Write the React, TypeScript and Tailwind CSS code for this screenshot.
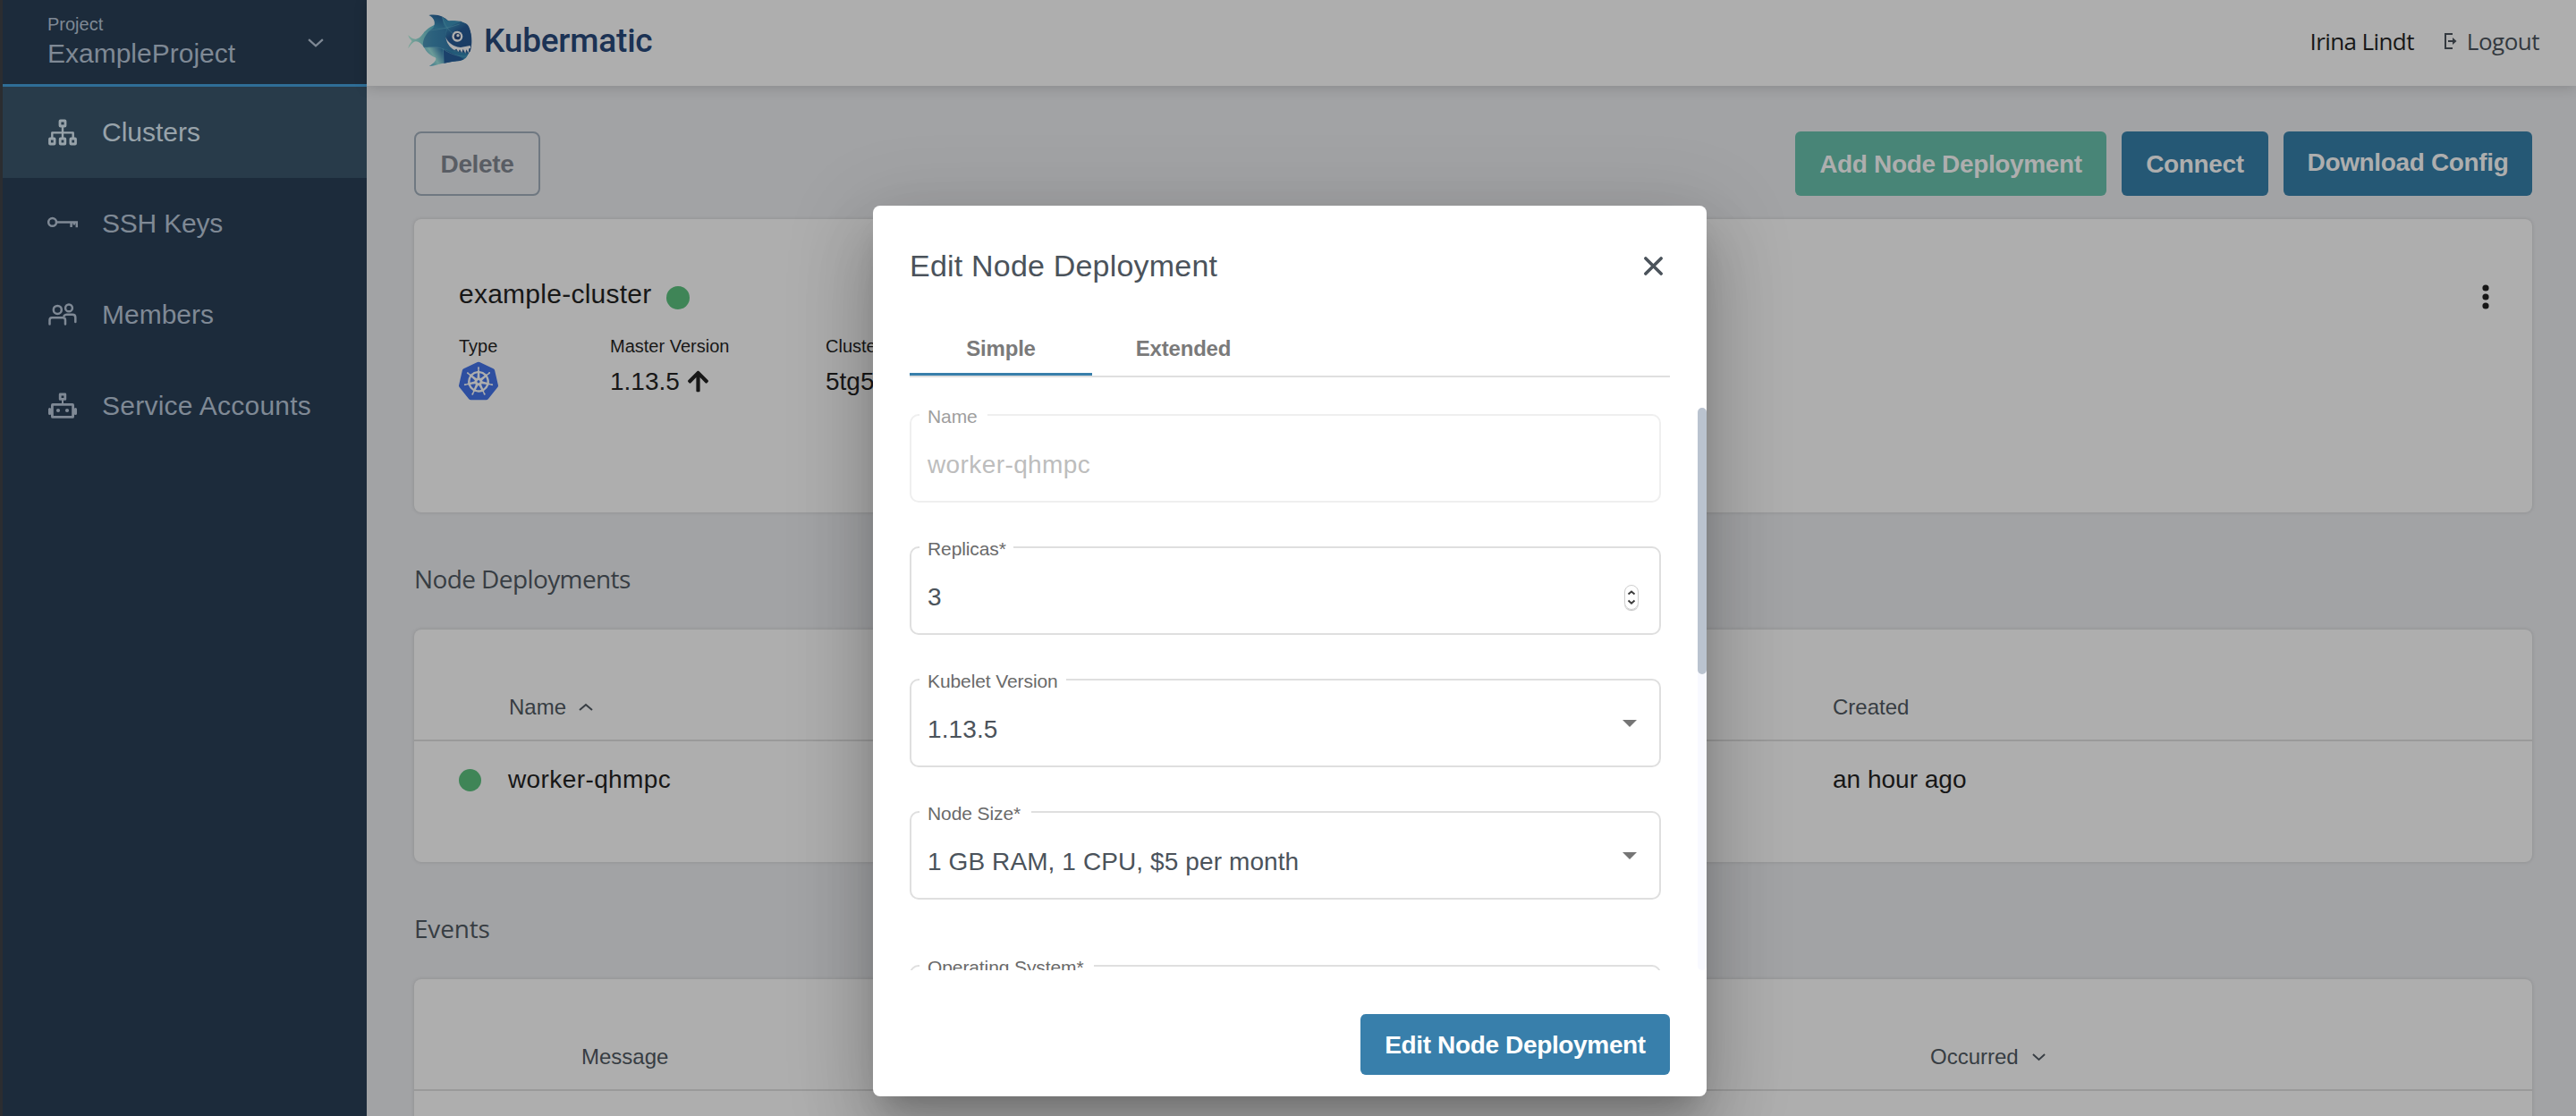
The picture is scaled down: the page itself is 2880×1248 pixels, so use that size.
import type { ReactNode } from "react";
import { FaArrowUp } from "react-icons/fa";
import { SiKubernetes } from "react-icons/si";

function FishLogo() {
  return (
    <svg width="72" height="58" viewBox="47 47 216 174" className="shrink-0">
      <defs>
        <linearGradient id="tail" x1="0" x2="1">
          <stop offset="0" stopColor="#7fa79a" />
          <stop offset="0.4" stopColor="#3f7f8c" />
          <stop offset="1" stopColor="#1c426b" />
        </linearGradient>
        <linearGradient id="fin" x1="0.7" y1="0" x2="0.1" y2="1">
          <stop offset="0" stopColor="#1b4068" />
          <stop offset="1" stopColor="#2f7187" />
        </linearGradient>
        <linearGradient id="low" x1="1" y1="0.2" x2="0" y2="0.8">
          <stop offset="0" stopColor="#1f5075" />
          <stop offset="0.5" stopColor="#6c9c99" />
          <stop offset="1" stopColor="#2a6a85" />
        </linearGradient>
        <linearGradient id="head" x1="0" y1="0" x2="0.6" y2="1">
          <stop offset="0" stopColor="#2f6e86" />
          <stop offset="0.45" stopColor="#1a3f68" />
          <stop offset="1" stopColor="#1c3d64" />
        </linearGradient>
      </defs>
      <path d="M48 117C56 124 62 131 74 130C85 129 92 120 101 108C118 90 138 78 180 69L225 70C250 80 262 105 261 140C260 175 245 203 190 206C160 206 120 185 101 158C92 145 84 138 74 138C62 139 55 153 48 162C50 147 60 140 60 137C58 131 50 128 48 117Z" fill="url(#tail)" />
      <path d="M117 50C150 45 168 56 184 70L176 100L131 94C141 78 138 60 117 50Z" fill="url(#fin)" />
      <path d="M184 70C200 67 212 70 224 72C206 78 190 90 178 99C160 80 168 72 162 56C170 60 178 68 184 70Z" fill="#2a6580" />
      <path d="M178 98C195 80 225 68 244 79C262 92 263 150 256 172C225 182 180 160 173 124Z" fill="url(#head)" />
      <path d="M131 94L176 98L173 124C178 142 190 155 206 164L200 172L165 162L101 158C90 140 110 105 131 94Z" fill="#1e4c73" opacity="0.6" />
      <path d="M102 158C130 158 150 155 165 163L168 211C150 213 140 220 118 221C138 210 146 196 138 191C120 185 108 172 102 158Z" fill="url(#low)" />
      <path d="M166 164C190 170 225 178 250 178C244 196 230 204 206 204L168 211Z" fill="#235b79" />
      <path d="M166 164C190 174 215 186 235 198C220 206 200 204 206 204L168 211Z" fill="#1b416b" />
      <path d="M101 108C120 96 160 102 220 80M162 56C168 80 184 104 205 116M102 158C135 158 150 155 165 164L168 211M166 164C185 178 215 190 245 188" fill="none" stroke="#4d8190" strokeWidth="1.5" />
      <path d="M174 122C180 142 200 156 224 158L256 152L258 160L252 162L250 177L243 165L240 178L232 163L228 176L221 165L216 173L210 163L203 167C187 158 176 142 174 122Z" fill="#aeaeae" />
      <circle cx="213" cy="121" r="18" fill="#aeaeae" />
      <circle cx="213" cy="121" r="11" fill="#1a3258" />
      <circle cx="215" cy="118" r="5" fill="#aeaeae" />
    </svg>
  );
}

const strokeProps = { fill: "none", stroke: "currentColor", strokeWidth: 2.8, strokeLinejoin: "round" as const, strokeLinecap: "round" as const };

function SitemapIcon() {
  return (
    <svg width="34" height="30" viewBox="0 0 34 30" {...strokeProps}>
      <rect x="14" y="2" width="6" height="6" rx="0.6" />
      <rect x="2.5" y="22" width="5.6" height="6" rx="0.6" />
      <rect x="14.2" y="22" width="5.6" height="6" rx="0.6" />
      <rect x="25.9" y="22" width="5.6" height="6" rx="0.6" />
      <path d="M17 8V22M5.3 22V15.4H28.7V22" strokeWidth="2.4" />
    </svg>
  );
}

function KeyIcon() {
  return (
    <svg width="34" height="30" viewBox="0 0 34 30" fill="none" stroke="currentColor" strokeWidth="2.5">
      <circle cx="5.6" cy="13.4" r="4.4" />
      <path d="M10.2 13.4H32.8V19.2M26.6 13.4V19M29.8 16.4V13.6" />
    </svg>
  );
}

function MembersIcon() {
  return (
    <svg width="34" height="30" viewBox="0 0 34 30" {...strokeProps} strokeWidth="2.5">
      <circle cx="11.3" cy="9.4" r="4.5" />
      <circle cx="24" cy="7.4" r="3.9" />
      <path d="M2.5 25.5V21Q2.5 18.2 5 18.2H17.5Q20 18.2 20 21V25.5" />
      <path d="M18.6 16.2Q20 14.8 21.5 14.8H28Q31.3 14.8 31.3 18V23" />
    </svg>
  );
}

function RobotIcon() {
  return (
    <svg width="34" height="30" viewBox="0 0 34 30" {...strokeProps} strokeWidth="2.8">
      <rect x="14.2" y="2" width="5.6" height="5.4" />
      <path d="M17 8V13" strokeWidth="2" />
      <rect x="5.4" y="13.4" width="23.2" height="14" rx="0.5" />
      <path d="M2.6 18.5V23.4M31.4 18.5V23.4" strokeWidth="3.2" />
      <circle cx="12" cy="20" r="2.1" fill="currentColor" stroke="none" />
      <circle cx="22" cy="20" r="2.1" fill="currentColor" stroke="none" />
    </svg>
  );
}

function Chevron({ up = false, width = 16, stroke = 2 }: { up?: boolean; width?: number; stroke?: number }) {
  return (
    <svg width={width} height={width / 2} viewBox="0 0 16 8" fill="none" stroke="currentColor" strokeWidth={stroke} className="overflow-visible">
      <path d={up ? "M1 7L8 1L15 7" : "M1 1L8 7.4L15 1"} />
    </svg>
  );
}

function NavItem({ icon, label, active = false, tracking = "" }: { icon: ReactNode; label: string; active?: boolean; tracking?: string }) {
  return (
    <div className={`flex h-[102px] items-center pl-[50px] ${active ? "bg-[#283b4a] text-[#98a3aa]" : "text-[#7f8995]"}`}>
      {icon}
      <span className={`ml-[27px] text-[30px] leading-[40px] ${tracking}`}>{label}</span>
    </div>
  );
}

function Field({ label, children, disabled = false, notch }: { label: string; children: ReactNode; disabled?: boolean; notch: string }) {
  return (
    <div className={`relative flex h-[99px] w-[840px] shrink-0 items-start rounded-[10px] border-2 pr-[25px] pl-[18px] pt-[35px] text-[28px] leading-[40px] ${disabled ? "border-[#efefef] tracking-[0.4px] text-[#bdbdbd]" : "border-[#dfdfdf] tracking-[0.1px] text-[#4b535b]"}`}>
      <span className={`absolute -top-[11px] left-[9px] h-[24px] bg-white pl-[9px] text-[21px] leading-[24px] tracking-[-0.1px] whitespace-nowrap ${notch} ${disabled ? "text-[#9e9e9e]" : "text-[#6a6a6a]"}`}>{label}</span>
      {children}
    </div>
  );
}

function Caret() {
  return (
    <svg width="16" height="8" viewBox="0 0 16 8" className="mt-[9px] ml-auto">
      <path d="M0 0H16L8 8Z" fill="#757575" />
    </svg>
  );
}

const card = "rounded-[8px] bg-[#aeaeae] shadow-[0_0_4px_rgba(0,0,0,0.14)]";

export default function App() {
  return (
    <div className="relative flex h-[1248px] w-[2880px] overflow-hidden bg-[#a2a3a5] font-['Liberation_Sans',Arial,sans-serif] text-[#171717]">
      <aside className="flex w-[410px] shrink-0 flex-col border-l-3 border-[#2b2d30] bg-[#1c2b3b]">
        <div className="flex h-[97px] items-center justify-between border-b-3 border-[#2f6e97] pr-[48px] pl-[50px] text-[#7f8995]">
          <div className="pt-[1px]">
            <div className="text-[20px] leading-[24px]">Project</div>
            <div className="mt-[1px] text-[30px] leading-[40px]">ExampleProject</div>
          </div>
          <Chevron width={18} stroke={2} />
        </div>
        <NavItem icon={<SitemapIcon />} label="Clusters" active />
        <NavItem icon={<KeyIcon />} label="SSH Keys" tracking="tracking-[-0.2px]" />
        <NavItem icon={<MembersIcon />} label="Members" />
        <NavItem icon={<RobotIcon />} label="Service Accounts" tracking="tracking-[0.25px]" />
      </aside>

      <main className="flex min-w-0 flex-1 flex-col">
        <header className="flex h-[96px] shrink-0 items-center bg-[#aeaeae] pr-[41px] pl-[46px] shadow-[0_2px_14px_rgba(0,0,0,0.16)]">
          <div className="-mt-[6px] flex items-center">
            <FishLogo />
            <span className="ml-[13px] pt-[2px] font-[Roboto,sans-serif] text-[37px] leading-[44px] font-medium tracking-[-0.2px] text-[#1b3254]">Kubermatic</span>
          </div>
          <div className="-mt-[4px] ml-auto flex items-center font-['Open_Sans',sans-serif] text-[26px] leading-[40px]">
            <span className="tracking-[-0.6px]">Irina Lindt</span>
            <svg width="14" height="18" viewBox="0 0 14 18" fill="none" stroke="#33393f" strokeWidth="2" className="ml-[34px]">
              <path d="M9 1H1V17H9M4 9H10" />
              <path d="M9 5L13.5 9L9 13Z" fill="#33393f" stroke="none" />
            </svg>
            <span className="ml-[11px] tracking-[-0.5px] text-[#33393f]">Logout</span>
          </div>
        </header>

        <section className="flex flex-col px-[53px] pt-[51px] pr-[49px]">
          <div className="flex h-[72px] items-stretch text-[28px] leading-[40px] font-bold tracking-[-0.35px] text-[#aeaeae]">
            <button className="w-[141px] rounded-[8px] border-2 border-[#6f7881] pt-[1px] text-[#595d64]">Delete</button>
            <div className="ml-auto flex gap-[17px]">
              <button className="w-[348px] rounded-[6px] bg-[#488577] pt-[1px]">Add Node Deployment</button>
              <button className="w-[164px] rounded-[6px] bg-[#255875] pt-[1px]">Connect</button>
              <button className="w-[278px] rounded-[6px] bg-[#255875] pb-[3px]">Download Config</button>
            </div>
          </div>

          <div className={`mt-[26px] flex h-[328px] justify-between pt-[64px] pr-[46px] pl-[50px] ${card}`}>
            <div>
              <div className="flex items-center text-[30px] leading-[40px] tracking-[0.25px]">
                example-cluster
                <span className="mt-[8px] ml-[16px] size-[26px] rounded-full bg-[#3f8557]" />
              </div>
              <div className="mt-[26px] flex">
                <div className="w-[169px]">
                  <div className="text-[20px] leading-[24px]">Type</div>
                  <SiKubernetes className="mt-[5px] size-[44px] text-[#2e4fa0]" />
                </div>
                <div className="w-[241px]">
                  <div className="text-[20px] leading-[24px]">Master Version</div>
                  <div className="mt-[8px] flex items-center text-[28px] leading-[40px]">
                    1.13.5
                    <FaArrowUp className="-mt-[1px] ml-[7px] size-[27px]" />
                  </div>
                </div>
                <div>
                  <div className="text-[20px] leading-[24px]">Cluster ID</div>
                  <div className="mt-[8px] text-[28px] leading-[40px]">5tg5x7kq2c</div>
                </div>
              </div>
            </div>
            <svg width="12" height="30" viewBox="0 0 12 30" className="mt-[8px]" fill="#171717">
              <circle cx="6" cy="5" r="3.6" />
              <circle cx="6" cy="15" r="3.6" />
              <circle cx="6" cy="25" r="3.6" />
            </svg>
          </div>

          <h2 className="mt-[54px] font-['Open_Sans',sans-serif] text-[28px] leading-[40px] tracking-[-0.6px] text-[#373d43]">Node Deployments</h2>
          <div className={`mt-[37px] h-[260px] ${card}`}>
            <div className="flex h-[125px] items-start border-b-2 border-[#9a9a9a] pt-[71px] pl-[106px] text-[24px] leading-[32px] text-[#373d43]">
              <div className="flex w-[1480px] items-center">
                Name
                <span className="ml-[14px]"><Chevron up width={16} /></span>
              </div>
              <span>Created</span>
            </div>
            <div className="flex items-center pt-[23px] pl-[50px] text-[28px] leading-[40px]">
              <span className="size-[25px] rounded-full bg-[#3f8557]" />
              <span className="ml-[30px] w-[1481px] tracking-[0.4px]">worker-qhmpc</span>
              <span>an hour ago</span>
            </div>
          </div>

          <h2 className="mt-[54px] font-['Open_Sans',sans-serif] text-[28px] leading-[40px] tracking-[-0.2px] text-[#373d43]">Events</h2>
          <div className={`mt-[37px] h-[260px] ${card}`}>
            <div className="flex h-[125px] items-start border-b-2 border-[#9a9a9a] pt-[71px] pl-[187px] text-[24px] leading-[32px] text-[#373d43]">
              <span className="w-[1508px]">Message</span>
              <div className="flex items-center">
                Occurred
                <span className="ml-[15px]"><Chevron width={15} /></span>
              </div>
            </div>
          </div>
        </section>
      </main>

      <div role="dialog" className="absolute top-[230px] left-[976px] flex h-[996px] w-[932px] flex-col rounded-[8px] bg-white shadow-[0_22px_30px_-14px_rgba(0,0,0,0.2),0_48px_76px_6px_rgba(0,0,0,0.14),0_18px_92px_16px_rgba(0,0,0,0.12)]">
        <div className="flex items-center justify-between pt-[47px] pr-[49px] pl-[41px] text-[#4b535b]">
          <h1 className="text-[34px] leading-[40px] tracking-[0.2px]">Edit Node Deployment</h1>
          <svg width="21" height="21" viewBox="0 0 20 20" fill="none" stroke="currentColor" strokeWidth="3.4" strokeLinecap="round">
            <path d="M1.8 1.8L18.2 18.2M18.2 1.8L1.8 18.2" />
          </svg>
        </div>
        <div className="mx-[41px] mt-[37px] flex h-[68px] border-b-2 border-[#dfdfdf] text-center text-[24px] leading-[32px] font-bold tracking-[-0.2px] text-[#7a7a7a]">
          <div className="w-[204px] border-b-3 border-[#387fab] pt-[20px]">Simple</div>
          <div className="w-[204px] pt-[20px]">Extended</div>
        </div>
        <div className="mt-[34px] flex h-[629px] overflow-hidden pl-[41px]">
          <div className="flex flex-col pt-[7px]">
            <Field label="Name" disabled notch="w-[76px]">worker-qhmpc</Field>
            <div className="mt-[49px]" />
            <Field label="Replicas*" notch="w-[105px]">
              3
              <span className="mt-[6px] -mr-[2px] ml-auto flex h-[28px] w-[16px] flex-col items-center justify-center gap-[6px] rounded-full border border-[#cfcfcf] text-[#3c3c3c] shadow-[0_1px_1px_rgba(0,0,0,0.25)]">
                <Chevron up width={8} stroke={4} />
                <Chevron width={8} stroke={4} />
              </span>
            </Field>
            <div className="mt-[49px]" />
            <Field label="Kubelet Version" notch="w-[164px]">1.13.5<Caret /></Field>
            <div className="mt-[49px]" />
            <Field label="Node Size*" notch="w-[125px]">1 GB RAM, 1 CPU, $5 per month<Caret /></Field>
            <div className="mt-[73px]" />
            <Field label="Operating System*" notch="w-[195px]">Ubuntu<Caret /></Field>
          </div>
          <div className="ml-auto h-full w-[10px] rounded-full bg-[#f8f9ff]">
            <div className="h-[298px] rounded-full bg-[#bac3cf]" />
          </div>
        </div>
        <button className="mt-[49px] mr-[41px] ml-auto h-[68px] w-[346px] rounded-[6px] bg-[#387fab] pt-[1px] text-[28px] leading-[40px] font-bold tracking-[-0.35px] text-white">Edit Node Deployment</button>
      </div>
    </div>
  );
}
